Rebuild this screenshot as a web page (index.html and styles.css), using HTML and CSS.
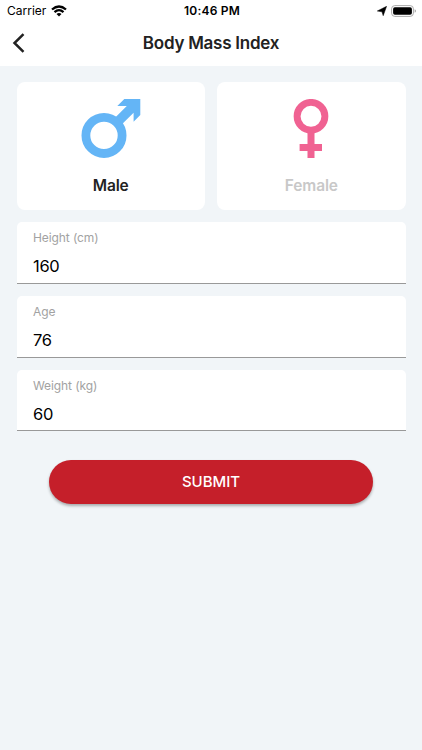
FILE: index.html
```html
<!DOCTYPE html>
<html lang="en">
<head>
<meta charset="utf-8">
<title>Body Mass Index</title>
<link rel="stylesheet" href="styles.css">
</head>
<body>
<header>
  <div class="status">
    <div class="carrier"><span>Carrier</span>
      <svg width="16" height="12" viewBox="0 0 16 12"><g fill="none" stroke="#000" stroke-width="2.3"><path d="M1 4.5Q8-1.6 15 4.5M3.5 7.2Q8 3.1 12.5 7.2"/></g><path d="M5.5 9Q8 6.8 10.5 9L8 11.6z"/></svg>
    </div>
    <time>10:46 PM</time>
    <div class="indicators">
      <svg width="10" height="10" viewBox="0 0 10 10"><path d="M9.600.300 6.200 9.700 5 5.800.300 5z" stroke="#000" stroke-width=".5"/></svg>
      <svg width="26" height="12" viewBox="0 0 26 12"><rect x=".6" y=".6" width="21.8" height="10.8" rx="3.2" fill="#fff" stroke="#aaa"/><rect x="2.1" y="2.2" width="18.8" height="7.6" rx="1.8"/><path d="M23.7 4.2q1.2.5 1.2 1.8t-1.2 1.8z" fill="#999"/></svg>
    </div>
  </div>
  <div class="nav">
    <svg class="back" width="14" height="22" viewBox="0 0 14 22"><path d="M11.5 2.2 2.5 11l9 8.8" fill="none" stroke="#222" stroke-width="2.5"/></svg>
    <h1>Body Mass Index</h1>
  </div>
</header>
<main>
  <div class="genders">
    <button class="card male">
      <svg width="60" height="60" viewBox="0 0 60 60"><circle cx="23" cy="36.4" r="18.1" fill="none" stroke="#64b5f6" stroke-width="8.8"/><path d="M43.3 0h16v16l-6.7 6.7v-9L41.2 24.9l-6.7-6.7L45.8 7h-9.5z" fill="#64b5f6"/></svg>
      <span>Male</span>
    </button>
    <button class="card female">
      <svg width="60" height="60" viewBox="0 0 60 60"><circle cx="30" cy="17.3" r="13.9" fill="none" stroke="#f06292" stroke-width="6.9"/><path d="M26.5 33h7v12H41v7h-7.500v6.900h-7V52h-7.900v-7h7.900z" fill="#f06292"/></svg>
      <span>Female</span>
    </button>
  </div>
  <div class="field"><span class="label">Height (cm)</span><span class="value">160</span></div>
  <div class="field"><span class="label">Age</span><span class="value">76</span></div>
  <div class="field"><span class="label">Weight (kg)</span><span class="value">60</span></div>
  <button class="submit"><span>SUBMIT</span></button>
</main>
</body>
</html>
```
FILE: styles.css
```css
* { box-sizing: border-box; }
body { margin: 0; min-height: 750px; background: #f1f5f8; font-family: Inter, "Liberation Sans", sans-serif; color: #222; }
svg { display: block; flex: none; }
button { border: 0; font-family: inherit; }
header { height: 66px; background: #fff; }
.status { height: 21px; display: grid; grid-template-columns: 1fr auto 1fr; align-items: center; padding: 0 5px 0 7px; color: #000; }
.carrier { display: flex; align-items: center; gap: 5px; font-size: 12px; letter-spacing: 0; }
.status time { font-size: 12px; font-weight: 600; letter-spacing: .2px; }
.indicators { display: flex; justify-content: flex-end; align-items: center; gap: 4px; }
.nav { height: 43px; display: grid; grid-template-columns: 30px 1fr 30px; align-items: center; }
.back { margin-left: 12px; }
h1 { margin: 0; font-size: 17px; line-height: 22px; font-weight: 600; text-align: center; letter-spacing: -.25px; }
main { padding: 15.7px 16.500px; display: flex; flex-direction: column; }
.genders { display: grid; grid-template-columns: 1fr 1fr; gap: 12.400px; margin-bottom: 12.300px; }
.card { height: 128.300px; padding: 17.300px 0 0; border-radius: 8px; background: #fff; display: flex; flex-direction: column; align-items: center; gap: 17px; font-size: 15.500px; line-height: 20px; font-weight: 600; letter-spacing: -.15px; color: #222; }
.female { color: #c8c8c8; }
.field { height: 61.700px; margin-bottom: 12px; padding: 8px 16.500px 0; border-radius: 5px 5px 0 0; background: #fff; border-bottom: 1px solid #999; display: flex; flex-direction: column; }
.label { font-size: 12px; line-height: 16px; letter-spacing: -.1px; color: #a2a2a2; }
.value { margin-top: 10px; font-size: 16.500px; line-height: 20px; color: #000; letter-spacing: -.3px; }
.submit { width: 324px; height: 44.500px; margin: 16.300px auto 0; border-radius: 23px; background: #c51f2a; color: #fff; font-size: 15px; font-weight: 500; box-shadow: 0 2px 3px rgba(0,0,0,.3); }
```
